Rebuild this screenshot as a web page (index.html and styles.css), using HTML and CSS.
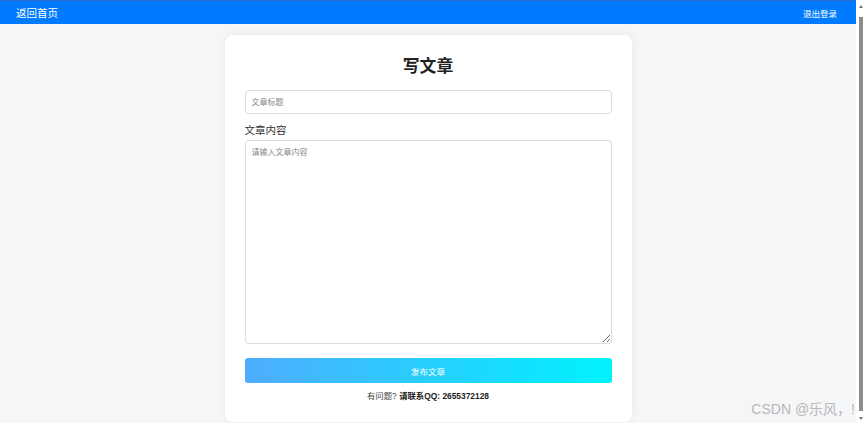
FILE: index.html
```html
<!DOCTYPE html>
<html lang="zh-CN">
<head>
    <meta charset="UTF-8">
    <meta name="viewport" content="width=device-width, initial-scale=1.0">
    <title>写文章</title>
    <link rel="stylesheet" href="styles.css">
</head>
<body>
    <div class="window">
        <div class="main">
            <!-- 顶部导航 -->
            <div class="navbar">
                <a href="#" class="nav-home">返回首页</a>
                <a href="#" class="nav-logout">退出登录</a>
            </div>

            <!-- 写文章表单 -->
            <div class="form-container">
                <h1>写文章</h1>
                <form id="articleForm">
                    <input type="text" id="title" name="title" placeholder="文章标题">
                    <label for="content">文章内容</label>
                    <textarea id="content" name="content" placeholder="请输入文章内容"></textarea>
                    <button type="submit">发布文章</button>
                </form>
                <p class="contact">有问题? <b>请联系QQ: 2655372128</b></p>
            </div>

            <div class="watermark">CSDN @乐风，!</div>
        </div>

        <!-- 滚动条 -->
        <div class="scrollbar">
            <span class="arrow-up"></span>
            <span class="thumb"></span>
            <span class="arrow-down"></span>
        </div>
    </div>
</body>
</html>
```

FILE: styles.css
```css
* {
    box-sizing: border-box;
}

body {
    font-family: "Liberation Sans", "Noto Sans CJK SC", sans-serif;
    background-color: #f5f6f8;
    margin: 0;
    padding: 0;
}

.window {
    display: flex;
    width: 865px;
    height: 423px;
    overflow: hidden;
}

.main {
    position: relative;
    flex: 1;
    display: flex;
    flex-direction: column;
    align-items: center;
    background-color: #f5f6f8;
}

.navbar {
    width: 100%;
    height: 24px;
    flex-shrink: 0;
    display: flex;
    justify-content: space-between;
    align-items: center;
    padding: 0 19px 0 16px;
    background-color: #007bff;
    border-top: 1px solid #2a6fcf;
}

.navbar a {
    color: #fff;
    text-decoration: none;
}

.nav-home {
    font-size: 10.5px;
}

.nav-logout {
    font-size: 8.5px;
}

.form-container {
    margin-top: 11px;
    width: 407px;
    background-color: #fff;
    padding: 20px;
    border-radius: 8px;
    box-shadow: 0 0 8px rgba(0, 0, 0, 0.06);
}

h1 {
    margin: 0;
    text-align: center;
    color: #222;
    font-size: 16.8px;
    line-height: 24px;
    font-weight: bold;
}

form {
    display: flex;
    flex-direction: column;
}

input[type="text"], textarea {
    width: 100%;
    border: 1px solid #dcdcdc;
    border-radius: 4px;
    font-family: inherit;
    font-size: 8px;
    color: #333;
    background-color: #fff;
}

input[type="text"] {
    margin-top: 11px;
    height: 24px;
    padding: 0 6px;
}

input::placeholder, textarea::placeholder {
    color: #888;
}

label {
    margin-top: 9px;
    margin-bottom: 3px;
    font-size: 10.5px;
    line-height: 14px;
    color: #333;
}

textarea {
    height: 204px;
    padding: 5px 6px;
    resize: vertical;
}

button {
    margin-top: 14px;
    height: 25px;
    border: none;
    border-radius: 3px;
    background: linear-gradient(to right, #4facfe, #00f2fe);
    color: #fff;
    font-family: inherit;
    font-size: 8.5px;
    cursor: pointer;
}

.contact {
    margin: 7px 0 0;
    text-align: center;
    font-size: 8.4px;
    line-height: 12px;
    color: #444;
}

.contact b {
    color: #222;
}

.watermark {
    position: absolute;
    right: 1px;
    bottom: 5px;
    font-size: 14px;
    color: #b8b8b8;
    white-space: nowrap;
}

.scrollbar {
    width: 9px;
    flex-shrink: 0;
    background-color: #fff;
    display: flex;
    flex-direction: column;
    align-items: center;
    padding: 5px 0 3px;
}

.arrow-up, .arrow-down {
    width: 0;
    height: 0;
    border-left: 2.5px solid transparent;
    border-right: 2.5px solid transparent;
}

.arrow-up {
    border-bottom: 3px solid #777;
}

.arrow-down {
    border-top: 3px solid #777;
}

.thumb {
    flex: 1;
    width: 4px;
    margin: 9px 0 6px;
    background-color: #8c8c8c;
}
```
